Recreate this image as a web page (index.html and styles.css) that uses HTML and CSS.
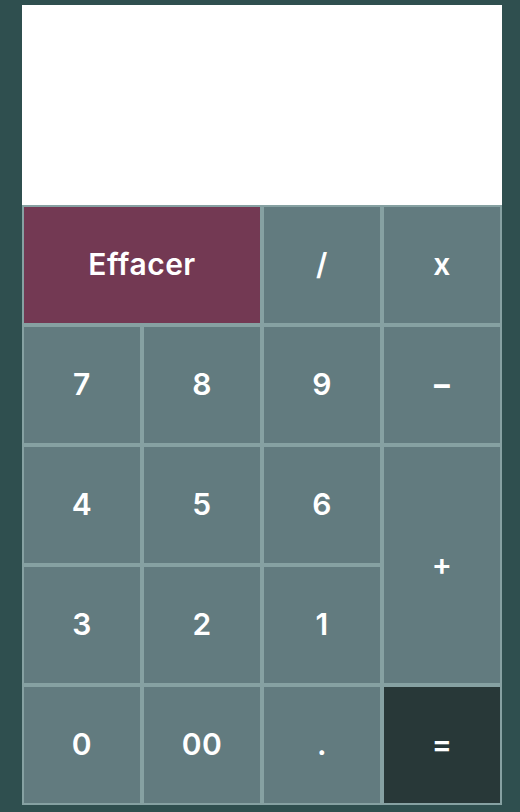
FILE: index.html
```html
<!DOCTYPE html>
<html lang="fr">
<head>
<meta charset="utf-8">
<title>Calculatrice</title>
<link rel="stylesheet" href="styles.css">
</head>
<body>
<div class="calc">
  <div class="display"></div>
  <div class="keys">
    <button class="key clear">Effacer</button>
    <button class="key">/</button>
    <button class="key">x</button>
    <button class="key">7</button>
    <button class="key">8</button>
    <button class="key">9</button>
    <button class="key"><span class="minus">-</span></button>
    <button class="key">4</button>
    <button class="key">5</button>
    <button class="key">6</button>
    <button class="key plus">+</button>
    <button class="key">3</button>
    <button class="key">2</button>
    <button class="key">1</button>
    <button class="key">0</button>
    <button class="key">00</button>
    <button class="key">.</button>
    <button class="key equals">=</button>
  </div>
</div>
</body>
</html>
```
FILE: styles.css
```css
html, body {
  margin: 0;
  padding: 0;
  background: #2f4f4f;
}
body {
  font-family: "Inter", "Liberation Sans", sans-serif;
}
.calc {
  width: 480px;
  margin: 5px 0 0 22px;
}
.display {
  height: 200px;
  background: #ffffff;
}
.keys {
  display: grid;
  grid-template-columns: repeat(4, 120px);
  grid-auto-rows: 120px;
}
.key {
  box-sizing: border-box;
  margin: 0;
  padding: 0 0 3px 0;
  border: 2px solid #86a1a2;
  background: #627b7f;
  color: #ffffff;
  font-family: "Inter", "Liberation Sans", sans-serif;
  font-weight: 600;
  font-size: 30px;
  letter-spacing: 0.5px;
  display: flex;
  align-items: center;
  justify-content: center;
}
.minus {
  display: inline-block;
  transform: scale(1.6, 1.2);
}
.clear {
  grid-column: span 2;
  background: #733953;
}
.plus {
  grid-row: span 2;
}
.equals {
  background: #283838;
}
```
